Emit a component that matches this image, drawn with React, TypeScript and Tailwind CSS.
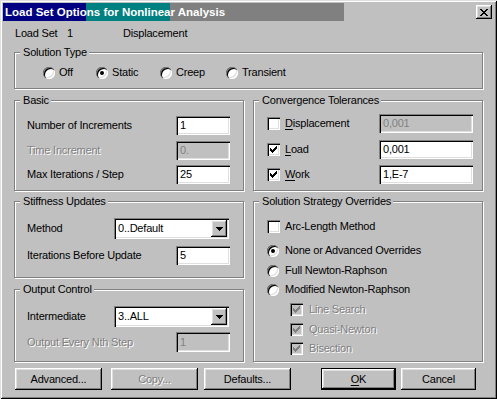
import React from 'react';

// classic win32 bevels
const etched = 'border border-[#808080] shadow-[1px_1px_0_#fff,inset_1px_1px_0_#fff]';
const sunken = 'shadow-[inset_1px_1px_0_#808080,inset_2px_2px_0_#000,inset_-1px_-1px_0_#fff,inset_-2px_-2px_0_#dfdfdf]';
const raised = 'shadow-[inset_-1px_-1px_0_#000,inset_1px_1px_0_#fff,inset_-2px_-2px_0_#808080,inset_2px_2px_0_#dfdfdf]';
const dim = 'text-[#808080] [text-shadow:1px_1px_0_#fff]';

const Group: React.FC<{ title: string; className?: string; children?: React.ReactNode }> = ({ title, className, children }) => (
  <fieldset className={`${etched} ${className ?? ''}`}>
    <legend className="ml-[5px] pl-[3px] pr-[2px] bg-[#c0c0c0] leading-[13px]">{title}</legend>
    {children}
  </fieldset>
);

const Edit: React.FC<{ value: string; disabled?: boolean; className?: string }> = ({ value, disabled, className }) => (
  <div className={`${sunken} ${disabled ? 'bg-[#c0c0c0] text-[#808080]' : 'bg-white text-black'} flex items-center pl-[4px] shrink-0 ${className ?? ''}`}>
    {value}
  </div>
);

const Check: React.FC<{ checked?: boolean; disabled?: boolean }> = ({ checked, disabled }) => (
  <span className={`${sunken} ${disabled ? 'bg-[#c0c0c0]' : 'bg-white'} w-[13px] h-[13px] shrink-0 flex items-center justify-center`}>
    {checked && (
      <svg width="7" height="7" viewBox="0 0 7 7" shapeRendering="crispEdges">
        <path
          fill={disabled ? '#808080' : '#000'}
          d="M0 2h1v3H0z M1 3h1v3H1z M2 4h1v3H2z M3 3h1v3H3z M4 2h1v3H4z M5 1h1v3H5z M6 0h1v3H6z"
        />
      </svg>
    )}
  </span>
);

const Radio: React.FC<{ checked?: boolean }> = ({ checked }) => (
  <span className={`${sunken} w-[12px] h-[12px] rounded-full bg-white shrink-0 flex items-center justify-center`}>
    {checked && <span className="w-[4px] h-[4px] rounded-full bg-black" />}
  </span>
);

const Combo: React.FC<{ value: string; className?: string }> = ({ value, className }) => (
  <div className={`${sunken} bg-white flex items-stretch p-[2px] shrink-0 ${className ?? ''}`}>
    <span className="flex-1 flex items-center pl-[2px]">{value}</span>
    <span className={`${raised} bg-[#c0c0c0] w-[16px] flex items-center justify-center`}>
      <svg width="7" height="4" viewBox="0 0 7 4" shapeRendering="crispEdges">
        <path d="M0 0h7v1H0z M1 1h5v1H1z M2 2h3v1H2z M3 3h1v1H3z" fill="#000" />
      </svg>
    </span>
  </div>
);

const Btn: React.FC<{ className?: string; disabled?: boolean; isDefault?: boolean; children: React.ReactNode }> = ({
  className,
  disabled,
  isDefault,
  children,
}) => (
  <div className={`h-[22px] shrink-0 ${isDefault ? 'border border-black' : ''} ${className ?? ''}`}>
    <div className={`${raised} w-full h-full flex items-center justify-center ${disabled ? dim : ''}`}>{children}</div>
  </div>
);

const Acc: React.FC<{ children: React.ReactNode }> = ({ children }) => (
  <span className="underline underline-offset-[2px]">{children}</span>
);

const App: React.FC = () => {
  return (
    <div className="w-[497px] h-[399px] bg-[#c0c0c0] p-[3px] overflow-hidden font-['Liberation_Sans',Arial,sans-serif] text-[11px] leading-[13px] tracking-[-0.2px] text-black shadow-[inset_1px_1px_0_#dfdfdf,inset_-1px_-1px_0_#000,inset_2px_2px_0_#fff,inset_-2px_-2px_0_#808080]">
      {/* title bar */}
      <div className="flex h-[18px]">
        <div className="w-[341px] h-[18px] pl-[2px] flex items-center text-white font-bold text-[11.5px] tracking-normal bg-[linear-gradient(to_right,#000080_0_83px,#008080_83px_167px,#808080_167px)]">
          Load Set Options for Nonlinear Analysis
        </div>
        <div className={`${raised} bg-[#c0c0c0] ml-auto mr-[2px] mt-[2px] w-[16px] h-[14px] flex items-center justify-center`}>
          <svg width="8" height="7" viewBox="0 0 8 7" shapeRendering="crispEdges">
            <path
              fill="#000"
              d="M0 0h2v1H0z M6 0h2v1H6z M1 1h2v1H1z M5 1h2v1H5z M2 2h4v1H2z M3 3h2v1H3z M2 4h4v1H2z M1 5h2v1H1z M5 5h2v1H5z M0 6h2v1H0z M6 6h2v1H6z"
            />
          </svg>
        </div>
      </div>

      <div className="px-[11px] flex flex-col">
        {/* header line */}
        <div className="flex h-[13px] mt-[6px] pl-[1px]">
          <span className="w-[52px]">Load Set</span>
          <span className="w-[56px]">1</span>
          <span>Displacement</span>
        </div>

        <Group title="Solution Type" className="mt-[6px] h-[43px]">
          <div className="flex items-center h-[13px] mt-[7px] pl-[28px]">
            <div className="w-[53px] flex items-center gap-[4px]"><Radio /><span>Off</span></div>
            <div className="w-[64px] flex items-center gap-[4px]"><Radio checked /><span>Static</span></div>
            <div className="w-[66px] flex items-center gap-[4px]"><Radio /><span>Creep</span></div>
            <div className="flex items-center gap-[4px]"><Radio /><span>Transient</span></div>
          </div>
        </Group>

        <div className="flex gap-[9px] mt-[5px]">
          {/* left column */}
          <div className="w-[230px] flex flex-col">
            <Group title="Basic" className="h-[97px]">
              <div className="flex flex-col pl-[12px]">
                <div className="flex items-center h-[19px] mt-[9px]">
                  <span className="w-[149px]">Number of Increments</span>
                  <Edit value="1" className="w-[54px] h-[19px]" />
                </div>
                <div className="flex items-center h-[19px] mt-[6px]">
                  <span className={`w-[149px] ${dim}`}>Time Increment</span>
                  <Edit value="0." disabled className="w-[54px] h-[19px]" />
                </div>
                <div className="flex items-center h-[19px] mt-[5px]">
                  <span className="w-[149px]">Max Iterations / Step</span>
                  <Edit value="25" className="w-[54px] h-[19px]" />
                </div>
              </div>
            </Group>

            <Group title="Stiffness Updates" className="mt-[4px] h-[83px]">
              <div className="flex flex-col pl-[12px]">
                <div className="flex items-center h-[21px] mt-[10px]">
                  <span className="w-[87px]">Method</span>
                  <Combo value="0..Default" className="w-[115px] h-[21px]" />
                </div>
                <div className="flex items-center h-[19px] mt-[7px]">
                  <span className="w-[149px]">Iterations Before Update</span>
                  <Edit value="5" className="w-[54px] h-[19px]" />
                </div>
              </div>
            </Group>

            <Group title="Output Control" className="mt-[5px] h-[79px]">
              <div className="flex flex-col pl-[12px]">
                <div className="flex items-center h-[21px] mt-[10px]">
                  <span className="w-[87px]">Intermediate</span>
                  <Combo value="3..ALL" className="w-[115px] h-[21px]" />
                </div>
                <div className="flex items-center h-[20px] mt-[5px]">
                  <span className={`w-[149px] ${dim}`}>Output Every Nth Step</span>
                  <Edit value="1" disabled className="w-[54px] h-[20px]" />
                </div>
              </div>
            </Group>
          </div>

          {/* right column */}
          <div className="w-[230px] flex flex-col">
            <Group title="Convergence Tolerances" className="h-[97px]">
              <div className="flex flex-col pl-[13px]">
                <div className="flex items-center h-[19px] mt-[7px]">
                  <Check />
                  <span className="w-[94px] ml-[5px]"><Acc>D</Acc>isplacement</span>
                  <Edit value="0,001" disabled className="w-[94px] h-[19px]" />
                </div>
                <div className="flex items-center h-[19px] mt-[7px]">
                  <Check checked />
                  <span className="w-[94px] ml-[5px]"><Acc>L</Acc>oad</span>
                  <Edit value="0,001" className="w-[94px] h-[19px]" />
                </div>
                <div className="flex items-center h-[19px] mt-[6px]">
                  <Check checked />
                  <span className="w-[94px] ml-[5px]"><Acc>W</Acc>ork</span>
                  <Edit value="1,E-7" className="w-[94px] h-[19px]" />
                </div>
              </div>
            </Group>

            <Group title="Solution Strategy Overrides" className="mt-[4px] h-[167px]">
              <div className="flex flex-col pl-[13px]">
                <div className="flex items-center gap-[5px] h-[13px] mt-[12px]">
                  <Check />
                  <span>Arc-Length Method</span>
                </div>
                <div className="flex items-center gap-[6px] h-[13px] mt-[11px]">
                  <Radio checked />
                  <span>None or Advanced Overrides</span>
                </div>
                <div className="flex items-center gap-[6px] h-[13px] mt-[7px]">
                  <Radio />
                  <span>Full Newton-Raphson</span>
                </div>
                <div className="flex items-center gap-[6px] h-[13px] mt-[6px]">
                  <Radio />
                  <span>Modified Newton-Raphson</span>
                </div>
                <div className="flex items-center gap-[6px] h-[13px] mt-[7px] ml-[23px]">
                  <Check checked disabled />
                  <span className={dim}>Line Search</span>
                </div>
                <div className="flex items-center gap-[6px] h-[13px] mt-[7px] ml-[23px]">
                  <Check checked disabled />
                  <span className={dim}>Quasi-Newton</span>
                </div>
                <div className="flex items-center gap-[6px] h-[13px] mt-[6px] ml-[23px]">
                  <Check checked disabled />
                  <span className={dim}>Bisection</span>
                </div>
              </div>
            </Group>
          </div>
        </div>

        {/* buttons */}
        <div className="flex mt-[6px]">
          <Btn className="ml-[1px] w-[87px]">Advanced...</Btn>
          <Btn className="ml-[9px] w-[87px]" disabled>Copy...</Btn>
          <Btn className="ml-[6px] w-[87px]">Defaults...</Btn>
          <Btn className="ml-[30px] w-[75px]" isDefault><span><Acc>O</Acc>K</span></Btn>
          <Btn className="ml-[5px] w-[75px]">Cancel</Btn>
        </div>
      </div>
    </div>
  );
};

export default App;
